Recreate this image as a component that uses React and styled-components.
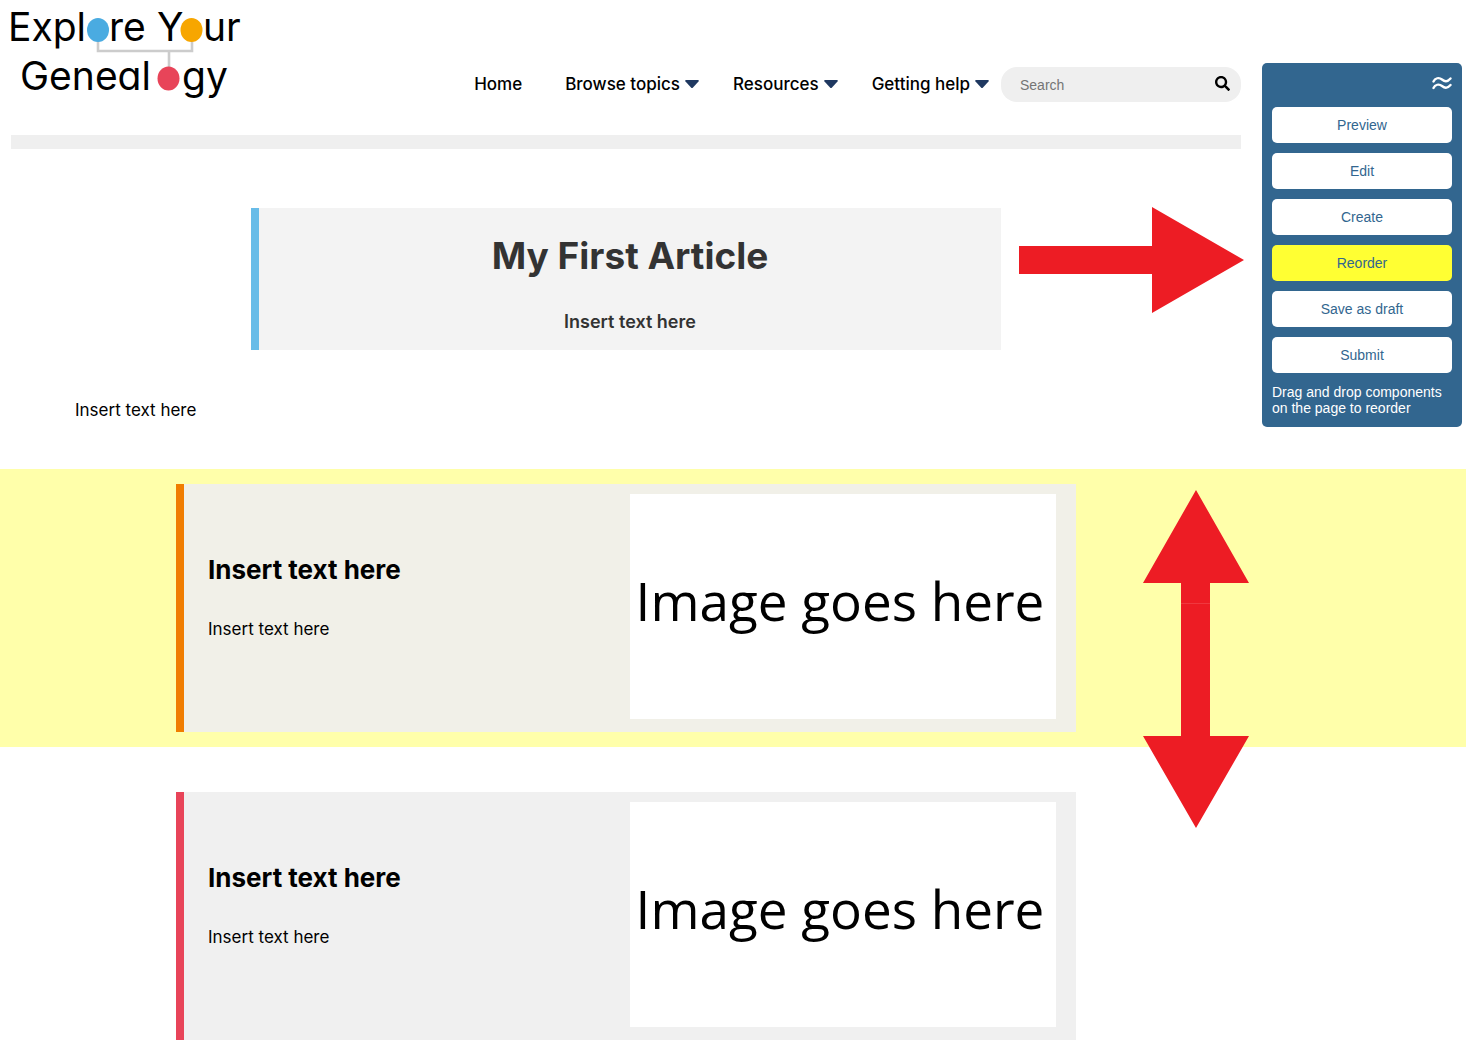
import styled, { createGlobalStyle } from 'styled-components';
import { FaSearch } from 'react-icons/fa';

const sections = [
  { id: 'first', accent: '#f07d00', dragging: true },
  { id: 'second', accent: '#e84459', dragging: false },
];

const tools = ['Preview', 'Edit', 'Create', 'Reorder', 'Save as draft', 'Submit'];

function Logo() {
  return (
    <LogoLink href="#" aria-label="Explore Your Genealogy">
      <LogoArt width="250" height="100" viewBox="0 0 250 100">
        <path d="M90 38V49H184V38M161 49V68" fill="none" stroke="#ccc" strokeWidth="2.6" />
        <LogoText x="0" y="39">Expl</LogoText>
        <ellipse cx="90" cy="28" rx="11" ry="12" fill="#4aabe1" />
        <LogoText x="101" y="39">re</LogoText>
        <LogoText x="149" y="39">Y</LogoText>
        <ellipse cx="183.5" cy="28" rx="11" ry="12" fill="#f7a600" />
        <LogoText x="195" y="39">ur</LogoText>
        <LogoText x="12" y="88">Geneal</LogoText>
        <ellipse cx="160.5" cy="76.5" rx="11" ry="12" fill="#e84459" />
        <LogoText x="174" y="88">gy</LogoText>
      </LogoArt>
    </LogoLink>
  );
}

function Caret() {
  return (
    <svg width="14" height="9" viewBox="0 0 14 9" aria-hidden="true">
      <path d="M1 0H13Q14.3 .3 13.5 1.4L8 7.6Q7 8.6 6 7.6L.5 1.4Q-.3 .3 1 0Z" fill="#1f3860" />
    </svg>
  );
}

function Feature({ accent, dragging }) {
  return (
    <Band $dragging={dragging}>
      <Card $accent={accent} $dragging={dragging}>
        <CardText>
          <CardTitle>Insert text here</CardTitle>
          <Copy>Insert text here</Copy>
        </CardText>
        <Picture>Image goes here</Picture>
      </Card>
      {dragging && (
        <DragArrow width="108" height="338" viewBox="0 0 108 338" aria-hidden="true">
          <path d="M54 0L107 93H68V246H107L54 338L1 246H39V93H1Z" fill="#ed1c24" />
          <path d="M39 113.5H68" stroke="#f0383f" />
        </DragArrow>
      )}
    </Band>
  );
}

function App() {
  return (
    <>
      <GlobalStyle />
      <Header>
        <Logo />
        <Nav>
          <HomeLink href="#">Home</HomeLink>
          <MenuButton type="button">Browse topics <Caret /></MenuButton>
          <MenuButton type="button">Resources <Caret /></MenuButton>
          <MenuButton type="button">Getting help <Caret /></MenuButton>
        </Nav>
        <Search role="search">
          <SearchInput type="search" placeholder="Search" aria-label="Search" />
          <SearchButton aria-label="Submit search"><FaSearch size={15} /></SearchButton>
        </Search>
      </Header>
      <main>
        <HeroSection>
          <Hero>
            <h1>My First Article</h1>
            <p>Insert text here</p>
          </Hero>
          <PointArrow width="225" height="108" viewBox="0 0 225 108" aria-hidden="true">
            <path d="M0 40H133V1L225 54L133 107V68H0Z" fill="#ed1c24" />
          </PointArrow>
        </HeroSection>
        <Intro>
          <Copy>Insert text here</Copy>
        </Intro>
        <FeatureList>
          {sections.map((s) => <Feature key={s.id} accent={s.accent} dragging={s.dragging} />)}
        </FeatureList>
      </main>
      <Panel aria-label="Editing tools">
        <Handle type="button" aria-label="Collapse tools">
          <svg width="20" height="14" viewBox="0 0 20 14" fill="none" stroke="#fff" strokeWidth="2.3">
            <path d="M1.500 5.500C3 2 7 1 10 3.500S16 5.500 18.500 2.500M1.500 12C3 8.500 7 7.500 10 10S16 12 18.500 9" strokeLinecap="round" />
          </svg>
        </Handle>
        {tools.map((tool) => (
          <ToolButton key={tool} type="button" $active={tool === 'Reorder'}>{tool}</ToolButton>
        ))}
        <Hint>Drag and drop components on the page to reorder</Hint>
      </Panel>
    </>
  );
}

const GlobalStyle = createGlobalStyle`
  * {
    box-sizing: border-box;
  }
  body {
    margin: 0;
    background: #fff;
    color: #000;
    font-family: Inter, sans-serif;
    font-size: 17px;
    line-height: 24px;
  }
  h1, h2, p {
    margin: 0;
  }
  button, input {
    font: inherit;
    border: 0;
    padding: 0;
    background: none;
  }
`

/* the right hand gutter is kept clear for the editing panel */
const Header = styled.header`
  display: flex;
  align-items: flex-end;
  margin: 0 225px 0 11px;
  padding: 2px 0 33px;
  border-bottom: 14px solid #efefef;
`

const LogoLink = styled.a`
  margin-left: -3px;
  height: 100px;
`

const LogoArt = styled.svg`
  display: block;
  overflow: visible;
`

const LogoText = styled.text`
  font-family: Inter, sans-serif;
  font-size: 39px;
  font-weight: 400;
  font-feature-settings: "cv11";
`

const Nav = styled.nav`
  display: flex;
  flex: 1;
  justify-content: flex-end;
  gap: 34px;
  padding: 0 12px 6px 0;
  font-weight: 500;
`

const HomeLink = styled.a`
  padding-right: 9px;
  color: #000;
  text-decoration: none;
`

const MenuButton = styled.button`
  display: flex;
  align-items: center;
  gap: 5px;
  color: #000;
  white-space: nowrap;
  cursor: pointer;
`

const Search = styled.form`
  display: flex;
  align-items: center;
  width: 240px;
  height: 35px;
  padding: 0 11px 0 19px;
  border-radius: 16px;
  background: #efefef;
`

const SearchInput = styled.input`
  flex: 1;
  min-width: 0;
  font-family: "Liberation Sans", sans-serif;
  font-size: 14px;
  &::placeholder {
    color: #757575;
  }
`

const SearchButton = styled.button`
  display: flex;
  padding-bottom: 3px;
  color: #000;
`

const HeroSection = styled.section`
  position: relative;
  padding: 59px 214px 48px 0;
`

const Hero = styled.div`
  max-width: 750px;
  margin: auto;
  padding: 24px 12px 16px;
  border-left: 8px solid #68bce8;
  background: #f3f3f3;
  color: #333;
  text-align: center;
  h1 {
    margin-bottom: 30px;
    font-size: 37px;
    font-weight: 700;
    line-height: 48px;
  }
  p {
    font-size: 18px;
    font-weight: 600;
  }
`

const PointArrow = styled.svg`
  position: absolute;
  top: 57px;
  right: 222px;
`

const Intro = styled.section`
  padding: 0 289px 47px 75px;
`

const Copy = styled.p`
  font-size: 17px;
  line-height: 24px;
`

const FeatureList = styled.div`
  display: flex;
  flex-direction: column;
  gap: 30px;
`

const Band = styled.section`
  position: relative;
  padding: 15px 214px 15px 0;
  background: ${(p) => (p.$dragging ? '#ffffaa' : 'none')};
`

const Card = styled.article`
  display: flex;
  max-width: 900px;
  margin: auto;
  padding: 10px 20px 13px 24px;
  border-left: 8px solid ${(p) => p.$accent};
  background: ${(p) => (p.$dragging ? '#f1f0e8' : '#f0f0f0')};
`

const CardText = styled.div`
  display: flex;
  flex: 1;
  flex-direction: column;
  justify-content: center;
  gap: 31px;
  padding-bottom: 18px;
`

const CardTitle = styled.h2`
  font-size: 26px;
  font-weight: 700;
  line-height: 32px;
`

const Picture = styled.div`
  display: flex;
  align-items: center;
  justify-content: center;
  width: 426px;
  height: 225px;
  padding: 0 6px 12px 0;
  background: #fff;
  font-family: "Open Sans", sans-serif;
  font-size: 53px;
  line-height: 72px;
  white-space: nowrap;
`

const DragArrow = styled.svg`
  position: absolute;
  top: 21px;
  right: 216px;
  z-index: 1;
`

const Panel = styled.aside`
  position: fixed;
  top: 63px;
  right: 4px;
  display: flex;
  flex-direction: column;
  gap: 10px;
  width: 200px;
  padding: 10px;
  border-radius: 5px;
  background: #32668f;
  font-family: "Liberation Sans", sans-serif;
  font-size: 14px;
`

const Handle = styled.button`
  display: flex;
  align-items: center;
  justify-content: flex-end;
  height: 24px;
  padding-bottom: 4px;
  cursor: move;
`

const ToolButton = styled.button`
  height: 36px;
  border-radius: 5px;
  background: ${(p) => (p.$active ? '#ffff33' : '#fff')};
  color: #32668f;
  cursor: pointer;
`

const Hint = styled.p`
  padding: 1px 0;
  color: #fff;
  line-height: 16px;
`

export default App
